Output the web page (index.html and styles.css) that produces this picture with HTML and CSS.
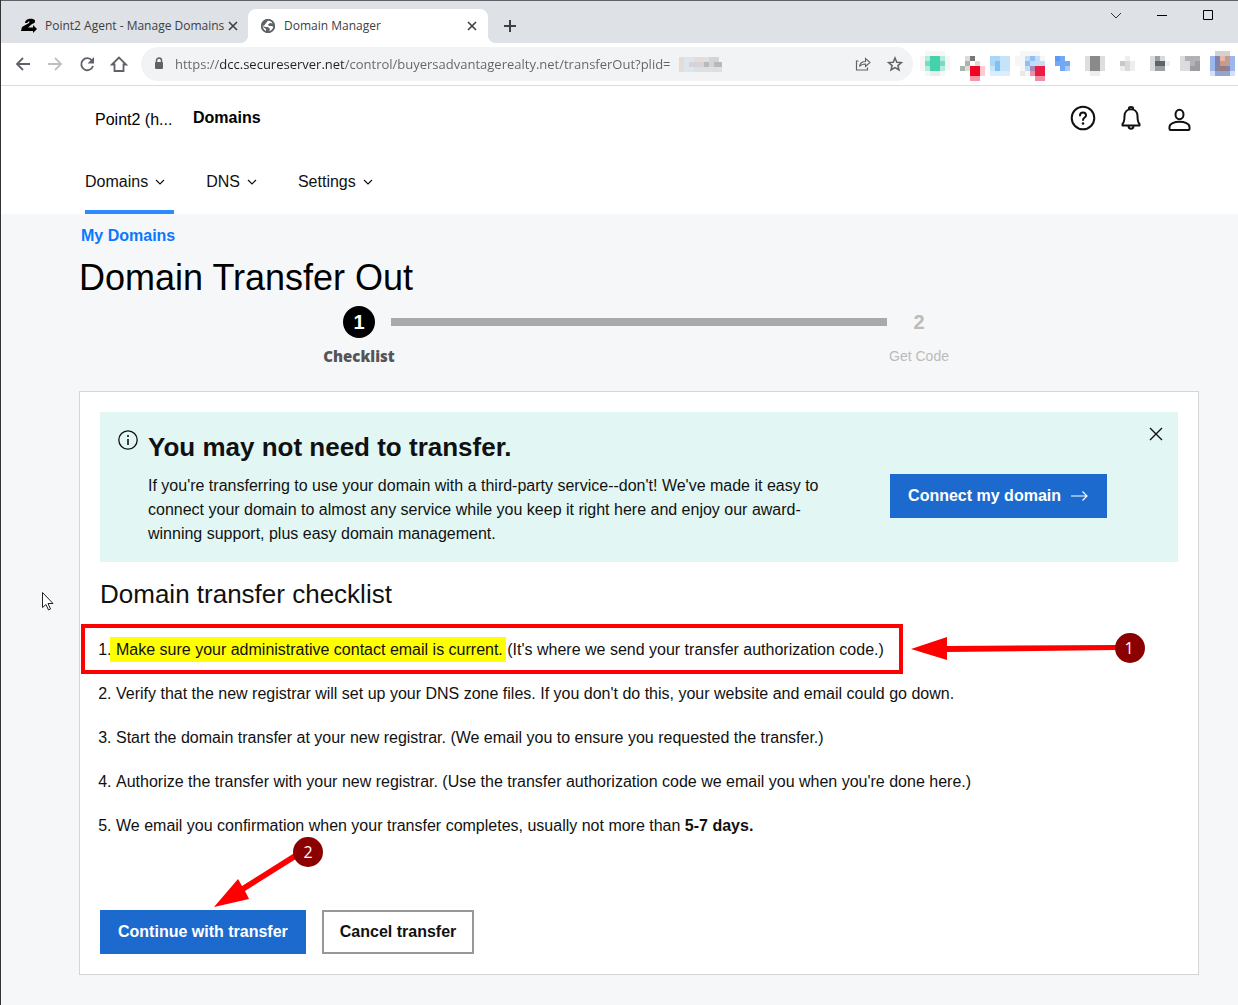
FILE: index.html
```html
<!DOCTYPE html>
<html lang="en">
<head>
    <meta charset="UTF-8">
    <title>Domain Manager</title>
    <link rel="stylesheet" href="styles.css">
</head>
<body>
<div class="browser">
    <div class="tabs">
        <div class="tab">
            <svg class="favicon" width="16" height="16" viewBox="0 0 16 16">
                <path d="M4 5C4 1 9 0 12 1c3 1 3 4-1 5L7 9.500h5V7l4 4-4 4v-2H0l1-4 7-4c1-1 0-2-1-1L6 5z" fill="#000"/>
            </svg>
            <span class="tab-title">Point2 Agent - Manage Domains</span>
            <button class="tab-close" aria-label="Close tab">
                <svg width="10" height="10" viewBox="0 0 10 10"><path d="M1 1l8 8M9 1L1 9" stroke="#3c4043" stroke-width="1.600"/></svg>
            </button>
        </div>
        <div class="tab active">
            <svg class="favicon" width="16" height="16" viewBox="0 0 16 16">
                <circle cx="8" cy="8" r="7" fill="#5f6368"/>
                <path d="M8 2.500c2 0 4 1 5 3L10 5 8 6.500 9 8h3l1.500 1-1 2.500L9 14l1-3-2-2H5L2.500 7C2 9 3 12 6 13.500V11L3 9z" fill="#fff"/>
                <circle cx="8" cy="8" r="6.200" fill="none" stroke="#5f6368" stroke-width="1.600"/>
            </svg>
            <span class="tab-title">Domain Manager</span>
            <button class="tab-close" aria-label="Close tab">
                <svg width="10" height="10" viewBox="0 0 10 10"><path d="M1 1l8 8M9 1L1 9" stroke="#3c4043" stroke-width="1.600"/></svg>
            </button>
        </div>
        <button class="new-tab" aria-label="New tab">
            <svg width="12" height="12" viewBox="0 0 12 12"><path d="M6 0v12M0 6h12" stroke="#3c4043" stroke-width="2"/></svg>
        </button>
        <div class="window-ctrl">
            <button aria-label="Search tabs">
                <svg width="12" height="12" viewBox="0 0 12 12"><path d="M1 4l5 5 5-5" fill="none" stroke="#333"/></svg>
            </button>
            <button aria-label="Minimize">
                <svg width="12" height="12" viewBox="0 0 12 12"><path d="M1 6.500h10" stroke="#000"/></svg>
            </button>
            <button aria-label="Maximize">
                <svg width="12" height="12" viewBox="0 0 12 12"><path d="M1.500 1.500h9v9h-9z" fill="none" stroke="#000"/></svg>
            </button>
        </div>
    </div>

    <div class="toolbar">
        <button aria-label="Back">
            <svg width="16" height="16" viewBox="0 0 16 16"><path d="M15 8H2M8 2L2 8l6 6" fill="none" stroke="#5f6368" stroke-width="1.800"/></svg>
        </button>
        <button aria-label="Forward">
            <svg width="16" height="16" viewBox="0 0 16 16"><path d="M1 8h13M8 2l6 6-6 6" fill="none" stroke="#bdc0c3" stroke-width="1.800"/></svg>
        </button>
        <button aria-label="Reload">
            <svg width="16" height="16" viewBox="0 0 16 16"><path d="M13 4.500A6 6 0 1 0 14 10" fill="none" stroke="#5f6368" stroke-width="1.800"/><path d="M15 1v6.500H8.500z" fill="#5f6368"/></svg>
        </button>
        <button aria-label="Home">
            <svg width="18" height="18" viewBox="0 0 18 18"><path d="M2 9.500L9 2.500l7 7h-2.500V16h-9V9.500z" fill="none" stroke="#5f6368" stroke-width="1.800"/></svg>
        </button>
        <div class="address">
            <svg width="10" height="14" viewBox="0 0 10 14"><path d="M2.500 6V3.500a2.500 2.500 0 0 1 5 0V6" fill="none" stroke="#5f6368" stroke-width="1.500"/><rect x="1" y="5" width="8" height="7" rx="1" fill="#5f6368"/></svg>
            <input class="url" type="text" aria-label="Address" value="https://dcc.secureserver.net/control/buyersadvantagerealty.net/transferOut?plid=">
            <svg class="hidden-id" width="45" height="15" shape-rendering="crispEdges">
                <path fill="#e6dcd6" d="M0 0h5v15H0zM15 0h10v10H15z"/>
                <path fill="#dbe6ee" d="M5 0h10v15H5zM20 5h5v10h-5z"/>
                <path fill="#d5d3d6" d="M10 5h15v5H10zM30 0h10v10H30z"/>
                <path fill="#b9b9bd" d="M25 5h5v5h-5zM35 5h8v5h-8z"/>
                <path fill="#dde0e3" d="M25 0h5v5h-5zM15 10h28v5H15z"/>
            </svg>
            <button aria-label="Share">
                <svg width="16" height="16" viewBox="0 0 16 16"><path d="M3.500 5H1.500v9h11v-2.500" fill="none" stroke="#5f6368" stroke-width="1.200"/><path d="M4.500 10.500C5 7 7 5.500 10.500 5.500V2.500L15 6.500l-4.500 4V8C8 8 6 8.500 4.500 10.500z" fill="none" stroke="#5f6368" stroke-width="1.100"/></svg>
            </button>
            <button aria-label="Bookmark">
                <svg width="16" height="16" viewBox="0 0 16 16"><path d="M8 2l1.800 4.200 4.600.4-3.500 3 1.100 4.400L8 11.600 4 14l1.100-4.400-3.500-3 4.600-.4z" fill="none" stroke="#5f6368" stroke-width="1.500"/></svg>
            </button>
        </div>
        <div class="extensions">
            <button aria-label="Extension 1"><svg viewBox="0 0 32 32">
                <path fill="#f6f6f6" d="M7 3h20v25H7zM2 8h30v15H2z"/>
                <path fill="#b5ecdd" d="M7 8h20v15H7z"/>
                <path fill="#77dcc2" d="M7 13h20v5H7z"/>
                <path fill="#46d1ad" d="M12 8h10v15H12z"/>
                <path fill="#e8eeec" d="M12 23h10v5H12z"/>
            </svg></button>
            <button aria-label="Extension 2"><svg viewBox="0 0 32 32">
                <path fill="#dcdcdc" d="M15 8h5v5h-5zM25 13h5v5h-5zM15 18h5v5h-5z"/>
                <path fill="#777" d="M20 8h5v5h-5z"/>
                <path fill="#a9b5ab" d="M15 13h5v5h-5zM10 18h5v5h-5z"/>
                <path fill="#fbcbd2" d="M30 18h5v10h-5z"/>
                <path fill="#f795a5" d="M20 28h10v5H20z"/>
                <path fill="#ee0624" d="M20 18h10v10H20z"/>
            </svg></button>
            <button aria-label="Extension 3"><svg viewBox="0 0 32 32">
                <path fill="#c6e3fa" d="M8 8h20v15H8z"/>
                <path fill="#d9edfc" d="M8 23h20v5H8z"/>
                <path fill="#a9d7f8" d="M8 8h10v10H8z"/>
                <path fill="#7fc1f2" d="M13 13h5v10h-5z"/>
            </svg></button>
            <button aria-label="Extension 4"><svg viewBox="0 0 32 32">
                <path fill="#f6f6f6" d="M6 3h20v25H6zM1 8h30v10H1z"/>
                <path fill="#c2ddf8" d="M11 8h15v15H11zM26 13h5v5h-5z"/>
                <path fill="#8dc0f3" d="M16 8h5v5h-5zM11 13h5v5h-5z"/>
                <path fill="#e8e8e8" d="M6 23h5v5H6z"/>
                <path fill="#ab87b5" d="M16 18h5v5h-5z"/>
                <path fill="#f08fa5" d="M16 23h5v5h-5zM21 28h10v5H21z"/>
                <path fill="#ea1d42" d="M21 18h10v10H21z"/>
            </svg></button>
            <button aria-label="Extension 5"><svg viewBox="0 0 32 32">
                <path fill="#a9cbfb" d="M9 8h15v15H9z"/>
                <path fill="#5b9af4" d="M9 8h5v5H9z"/>
                <path fill="#72a9f7" d="M14 8h5v15h-5zM9 13h15v5H9z"/>
                <path fill="#fff" d="M9 18h5v5H9zM19 8h5v5h-5z"/>
            </svg></button>
            <button aria-label="Extension 6"><svg viewBox="0 0 32 32">
                <path fill="#dedede" d="M7 8h20v15H7z"/>
                <path fill="#eee" d="M12 23h10v5H12z"/>
                <path fill="#8a8a8a" d="M12 8h10v15H12z"/>
            </svg></button>
            <button aria-label="Extension 7"><svg viewBox="0 0 32 32">
                <path fill="#eee" d="M15 8h5v5h-5zM10 18h5v5h-5zM20 13h5v10h-5z"/>
                <path fill="#c8c8c8" d="M10 13h5v5h-5z"/>
                <path fill="#d9d9d9" d="M15 13h5v10h-5z"/>
            </svg></button>
            <button aria-label="Extension 8"><svg viewBox="0 0 32 32">
                <path fill="#d8dadb" d="M8 8h15v15H8z"/>
                <path fill="#9b9ea2" d="M13 8h5v15h-5zM18 18h5v5h-5z"/>
                <path fill="#5f6368" d="M13 13h10v5H13z"/>
                <path fill="#eee" d="M23 13h5v5h-5z"/>
            </svg></button>
            <button aria-label="Extension 9"><svg viewBox="0 0 32 32">
                <path fill="#dcdcdd" d="M6 8h20v15H6z"/>
                <path fill="#b0b2b5" d="M11 8h15v5H11zM16 13h5v10h-5z"/>
                <path fill="#9b9da1" d="M21 13h5v10h-5zM16 18h5v5h-5z"/>
            </svg></button>
            <button aria-label="Profile"><svg viewBox="0 0 32 32">
                <path fill="#d3d2d3" d="M9 3h15v5H9z"/>
                <path fill="#9bb7ee" d="M4 8h25v15H4z"/>
                <path fill="#d5dff6" d="M4 23h25v5H4z"/>
                <path fill="#8184a8" d="M9 8h5v15H9zM19 18h5v5h-5z"/>
                <path fill="#c59c8e" d="M14 8h10v10H14z"/>
                <path fill="#e9b9ae" d="M14 8h5v5h-5z"/>
                <path fill="#997c78" d="M14 18h5v5h-5z"/>
                <path fill="#93a4d0" d="M9 23h15v5H9z"/>
            </svg></button>
        </div>
    </div>
</div>

<header class="header">
    <div class="brand">
        <span class="account">Point2 (h...</span>
        <strong class="product">Domains</strong>
        <div class="user-icons">
            <button aria-label="Help">
                <svg width="26" height="26" viewBox="0 0 26 26" fill="none" stroke="#111" stroke-width="2"><circle cx="13" cy="13" r="11.300"/><path d="M10 10.500c0-4 6-4 6 0 0 2-3 2-3 4.500" stroke-linecap="round"/><circle cx="13" cy="18.500" r="1.300" fill="#111" stroke="none"/></svg>
            </button>
            <button aria-label="Notifications">
                <svg width="26" height="26" viewBox="0 0 26 26" fill="none" stroke="#111" stroke-width="2" stroke-linejoin="round"><path d="M4.500 20.500v-1.500c2-2 2-4 2-8 0-9 13-9 13 0 0 4 0 6 2 8v1.500z"/><path d="M11 4V3c0-1.500 4-1.500 4 0v1M10.500 21c0 3.500 5 3.500 5 0"/></svg>
            </button>
            <button aria-label="Account">
                <svg width="26" height="26" viewBox="0 0 26 26" fill="none" stroke="#111" stroke-width="2" stroke-linejoin="round"><ellipse cx="13.500" cy="9.500" rx="4" ry="4.800"/><path d="M3.500 24v-2c0-7 20-7 20 0v2c0 1 0 1-1 1h-18c-1 0-1 0-1-1z"/></svg>
            </button>
        </div>
    </div>
    <nav class="nav">
        <a class="current" href="#">Domains <svg width="12" height="12" viewBox="0 0 12 12"><path d="M2 4l4 4 4-4" fill="none" stroke="#111" stroke-width="1.200"/></svg></a>
        <a href="#">DNS <svg width="12" height="12" viewBox="0 0 12 12"><path d="M2 4l4 4 4-4" fill="none" stroke="#111" stroke-width="1.200"/></svg></a>
        <a href="#">Settings <svg width="12" height="12" viewBox="0 0 12 12"><path d="M2 4l4 4 4-4" fill="none" stroke="#111" stroke-width="1.200"/></svg></a>
    </nav>
</header>

<main class="main">
    <a class="back" href="#">My Domains</a>
    <h1>Domain Transfer Out</h1>

    <div class="steps">
        <div class="step done">
            <span class="num">1</span>
            <span class="label">Checklist</span>
        </div>
        <div class="bar"></div>
        <div class="step">
            <span class="num">2</span>
            <span class="label">Get Code</span>
        </div>
    </div>

    <div class="card">
        <div class="notice">
            <svg class="info" width="20" height="20" viewBox="0 0 20 20"><circle cx="10" cy="10" r="9.200" fill="none" stroke="#111" stroke-width="1.300"/><path d="M10 9v6M10 5v2" stroke="#111" stroke-width="1.600"/></svg>
            <div class="notice-text">
                <h2>You may not need to transfer.</h2>
                <p>If you're transferring to use your domain with a third-party service--don't! We've made it easy to connect your domain to almost any service while you keep it right here and enjoy our award-winning support, plus easy domain management.</p>
            </div>
            <button class="btn primary">Connect my domain
                <svg width="18" height="12" viewBox="0 0 18 12"><path d="M0 6h16M11.500 1.500L16 6l-4.500 4.500" fill="none" stroke="#fff" stroke-width="1.200"/></svg>
            </button>
            <button class="close" aria-label="Close">
                <svg width="14" height="14" viewBox="0 0 14 14"><path d="M1 1l12 12M13 1L1 13" stroke="#111" stroke-width="1.400"/></svg>
            </button>
        </div>

        <h3>Domain transfer checklist</h3>
        <ol class="checklist">
            <li class="marked">
                <mark>Make sure your administrative contact email is current.</mark> (It's where we send your transfer authorization code.)
                <span class="frame"></span>
                <svg class="arrow" width="236" height="32" viewBox="0 0 236 32">
                    <path d="M0 17L36 5v9l170-1v5l-170 2v8z" fill="#f00"/>
                    <circle cx="219" cy="16" r="15" fill="#8b0000"/>
                    <text x="218" y="22" text-anchor="middle">1</text>
                </svg>
            </li>
            <li>Verify that the new registrar will set up your DNS zone files. If you don't do this, your website and email could go down.</li>
            <li>Start the domain transfer at your new registrar. (We email you to ensure you requested the transfer.)</li>
            <li>Authorize the transfer with your new registrar. (Use the transfer authorization code we email you when you're done here.)</li>
            <li>We email you confirmation when your transfer completes, usually not more than <b>5-7 days.</b></li>
        </ol>

        <div class="actions">
            <button class="btn primary">Continue with transfer</button>
            <button class="btn">Cancel transfer</button>
            <svg class="arrow" width="112" height="72" viewBox="0 0 112 72">
                <path d="M1 71L25 43l4 7 54-34 3 5-54 34 4 8z" fill="#f00"/>
                <circle cx="95" cy="16" r="15" fill="#8b0000"/>
                <text x="95" y="22" text-anchor="middle">2</text>
            </svg>
        </div>
    </div>
    <svg class="cursor" width="13" height="20" viewBox="0 0 13 20"><path d="M1.500 1.500v15l3.500-3 2.500 5.500 2-1-2.500-5.500H12z" fill="#fff" stroke="#222"/></svg>
</main>
</body>
</html>
```
FILE: styles.css
```css
* {
    margin: 0;
    padding: 0;
    box-sizing: border-box;
}

body {
    min-height: 100vh;
    font: 16px/24px "Liberation Sans", Arial, sans-serif;
    color: #111;
    background: #f5f7f9;
    border-left: 1px solid #333;
}

button {
    font: inherit;
    color: inherit;
    border: 0;
    background: none;
    cursor: pointer;
}

a {
    color: inherit;
    text-decoration: none;
}

svg {
    display: block;
    flex-shrink: 0;
}

/* browser bar */
.browser {
    font: 12px/16px "Open Sans", sans-serif;
    color: #3c4043;
}

.tabs {
    display: flex;
    align-items: flex-end;
    height: 43px;
    background: #dee1e6;
    border-top: 1px solid #5f6368;
}

.tab {
    display: flex;
    align-items: center;
    width: 240px;
    height: 34px;
    padding: 0 11px 0 12px;
}

.tab:first-child {
    width: 247px;
    padding: 0 10px 0 20px;
}

.tab.active {
    position: relative;
    background: #fff;
    border-radius: 8px 8px 0 0;
}

.tab.active::before, .tab.active::after {
    content: "";
    position: absolute;
    bottom: 0;
    width: 8px;
    height: 8px;
}

.tab.active::before {
    left: -8px;
    background: radial-gradient(circle at 0 0, transparent 8px, #fff 8px);
}

.tab.active::after {
    right: -8px;
    background: radial-gradient(circle at 100% 0, transparent 8px, #fff 8px);
}

.tab-title {
    flex: 1;
    min-width: 0;
    margin-left: 8px;
    white-space: nowrap;
}

.new-tab {
    padding: 11px 16px;
}

.window-ctrl {
    display: flex;
    align-self: flex-start;
    margin-left: auto;
    padding-right: 7px;
}

.window-ctrl button {
    padding: 8px 17px;
}

.toolbar {
    display: flex;
    align-items: center;
    height: 43px;
    background: #fff;
    border-bottom: 1px solid #dadce0;
}

.toolbar > button {
    display: flex;
    justify-content: center;
    width: 32px;
}

.toolbar > button:first-child {
    margin-left: 6px;
}

.address {
    display: flex;
    align-items: center;
    flex: 1;
    height: 34px;
    margin: 0 5px 0 6px;
    padding: 0 10px 0 13px;
    border-radius: 17px;
    background: #f1f3f4;
}

.address button {
    margin-left: 16px;
}

.url {
    width: 502px;
    margin-left: 11px;
    font: 13px/20px "Open Sans", sans-serif;
    color: #5f6368;
    border: 0;
    outline: 0;
    /* the host is darker than the rest of the address */
    background: linear-gradient(90deg, #5f6368 45px, #202124 45px, #202124 170px, #5f6368 170px);
    -webkit-background-clip: text;
    background-clip: text;
    -webkit-text-fill-color: transparent;
}

.hidden-id {
    margin: 0 auto 0 2px;
}

.extensions {
    display: flex;
}

.extensions svg {
    width: 32px;
    height: 32px;
    overflow: visible;
    shape-rendering: crispEdges;
}

/* header */
.header {
    padding: 0 46px 0 84px;
    background: #fff;
}

.brand {
    display: flex;
    align-items: center;
    height: 64px;
    padding-left: 10px;
    color: #000;
}

.product {
    margin-left: 20px;
}

.account {
    width: 78px;
    padding-top: 4px;
}

.user-icons {
    display: flex;
    gap: 22px;
    margin-left: auto;
}

.nav {
    display: flex;
    gap: 32px;
}

.nav a {
    display: flex;
    align-items: center;
    gap: 6px;
    height: 64px;
    padding-right: 8px;
    border-top: 4px solid transparent;
    border-bottom: 4px solid transparent;
}

.nav a.current {
    border-bottom-color: #2e8bff;
}

/* page */
.main {
    position: relative;
    padding: 10px 39px 30px 78px;
}

.back {
    margin-left: 2px;
    font-weight: bold;
    color: #0a78ff;
}

h1 {
    margin: 10px 0 8px;
    font-size: 36px;
    line-height: 40px;
    font-weight: normal;
    color: #000;
}

.steps {
    display: flex;
    padding: 0 calc(25% - 40px);
}

.step {
    display: flex;
    flex-direction: column;
    align-items: center;
    width: 80px;
    font-size: 14px;
    color: #bbb;
}

.num {
    width: 32px;
    height: 32px;
    margin-bottom: 6px;
    border-radius: 50%;
    font-size: 20px;
    line-height: 32px;
    font-weight: bold;
    text-align: center;
}

.done .num {
    color: #fff;
    background: #000;
}

.done .label {
    font-family: "Open Sans", sans-serif;
    font-size: 15px;
    font-weight: 800;
    color: #555;
}

.bar {
    flex: 1;
    height: 8px;
    margin: 12px -8px 0;
    background: #a9abaa;
}

.card {
    margin-top: 23px;
    padding: 20px;
    background: #fff;
    border: 1px solid #d4d5d6;
}

.notice {
    display: flex;
    align-items: flex-start;
    padding: 18px 15px 16px 18px;
    background: #e2f7f4;
}

.notice-text {
    flex: 1;
    margin: 0 48px 0 10px;
}

.notice h2 {
    margin-bottom: 10px;
    font-size: 26px;
    line-height: 34px;
}

.btn {
    display: flex;
    align-items: center;
    gap: 10px;
    height: 44px;
    padding: 0 16px;
    font-weight: bold;
    border: 2px solid #979797;
    background: #fff;
}

.btn.primary {
    color: #fff;
    border-color: #1d6acf;
    background: #1d6acf;
}

.notice .btn {
    margin-top: 44px;
}

.close {
    margin: -3px 0 0 42px;
}

h3 {
    margin: 16px 0 28px;
    font-size: 26px;
    line-height: 32px;
    font-weight: normal;
}

.checklist {
    padding-left: 16px;
}

.checklist li {
    margin-bottom: 20px;
}

mark {
    padding: 4px 3px 4px 6px;
    margin: 0 -3px 0 -6px;
    color: inherit;
    background: #ff0;
}

/* markup drawn over the list */
.marked, .actions {
    position: relative;
}

.frame {
    position: absolute;
    left: -35px;
    top: -14px;
    width: 822px;
    height: 50px;
    border: 4px solid #f00;
}

.arrow {
    position: absolute;
}

.arrow text {
    font: 16px "Open Sans", sans-serif;
    fill: #fff;
}

.marked .arrow {
    left: 795px;
    top: -6px;
}

.actions .arrow {
    left: 113px;
    bottom: 46px;
}

.actions {
    display: flex;
    gap: 16px;
    margin-top: 72px;
}

.cursor {
    position: absolute;
    left: 40px;
    top: 377px;
}
```
